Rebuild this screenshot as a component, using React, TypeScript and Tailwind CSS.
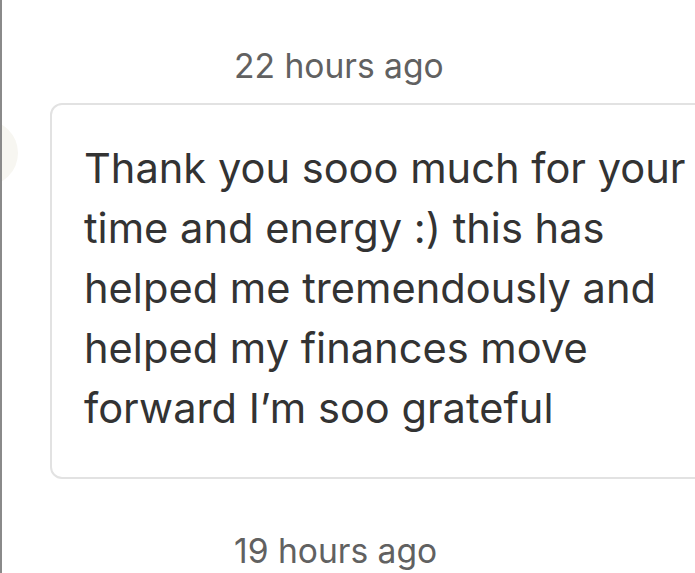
export default function App() {
    return (
        <div className="w-[695px] h-[573px] overflow-hidden bg-white border-l-2 border-[#8a8a8a] font-['Inter',sans-serif]">
            <div className="pt-[44px] pl-[232px] text-[33.6px] leading-[44px] text-[#616161]">22 hours ago</div>
            <div className="flex items-start mt-[15px]">
                <div className="w-[66px] h-[66px] shrink-0 rounded-full bg-[#f7f6f1] -ml-[50px] mt-[17px]"></div>
                <div className="ml-[32px] w-[680px] shrink-0 rounded-[12px] border-2 border-[#e2e2e2] pl-[32px] pt-[33px] pb-[39px]">
                    <p className="text-[41.6px] leading-[60px] text-[#333333]">
                        Thank you sooo much for your<br />
                        time and energy :) this has<br />
                        helped me tremendously and<br />
                        helped my finances move<br />
                        forward I’m soo grateful
                    </p>
                </div>
            </div>
            <div className="pt-[50px] pl-[232px] text-[33.6px] leading-[44px] text-[#616161]">19 hours ago</div>
        </div>
    );
}
